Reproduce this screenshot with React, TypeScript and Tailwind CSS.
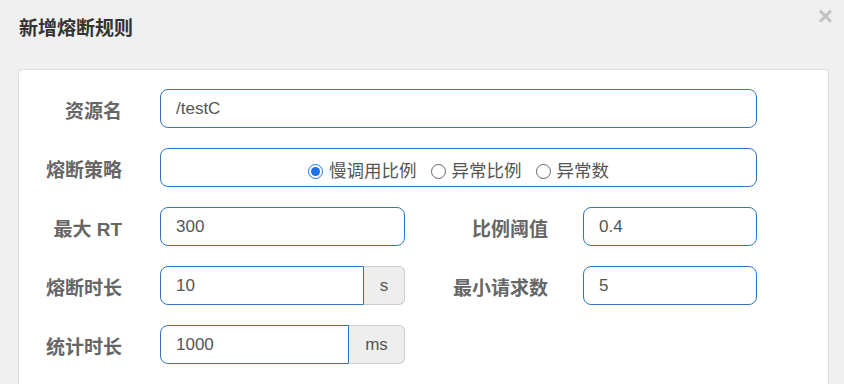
import React from 'react'

const font = { fontFamily: '"Liberation Sans", "Noto Sans CJK SC", sans-serif' }

function Label({ text, w }: { text: string; w: string }) {
  return (
    <label className={`${w} shrink-0 text-right text-[19px] font-bold text-[#666] pt-[7px] leading-[24px]`}>
      {text}
    </label>
  )
}

function TextBox({ value, w }: { value: string; w: string }) {
  return (
    <div
      className={`${w} h-[39px] border border-[#3277b9] rounded-[8px] bg-white flex items-center px-[15px] text-[17px] text-[#555]`}
    >
      {value}
    </div>
  )
}

function AddonBox({ value, unit, w, unitW }: { value: string; unit: string; w: string; unitW: string }) {
  return (
    <div className="flex h-[39px]">
      <div
        className={`${w} border border-[#3277b9] rounded-l-[8px] bg-white flex items-center px-[15px] text-[17px] text-[#555]`}
      >
        {value}
      </div>
      <div
        className={`${unitW} border border-l-0 border-[#cccccc] rounded-r-[6px] bg-[#eeeeee] flex items-center justify-center text-[17px] text-[#555]`}
      >
        {unit}
      </div>
    </div>
  )
}

function Radio({ label, checked }: { label: string; checked?: boolean }) {
  return (
    <span className="flex items-center gap-[6px]">
      {checked ? (
        <span className="w-[15px] h-[15px] rounded-full border-[1.5px] border-[#1a73e8] flex items-center justify-center">
          <span className="w-[9px] h-[9px] rounded-full bg-[#1a73e8]" />
        </span>
      ) : (
        <span className="w-[15px] h-[15px] rounded-full border border-[#666] bg-white" />
      )}
      <span>{label}</span>
    </span>
  )
}

export default function App() {
  return (
    <div className="w-[844px] h-[384px] bg-[#f0f0f0] overflow-hidden relative" style={font}>
      <button className="absolute right-[11px] top-[3px] text-[26px] font-bold leading-none text-[#c2c2c2]">
        ×
      </button>
      <h4 className="pl-[19px] pt-[19px] text-[19px] font-bold text-[#333] leading-[20px]">
        新增熔断规则
      </h4>
      <div className="ml-[18px] mt-[30px] w-[811px] h-[400px] bg-white border border-[#dddddd] rounded-[4px] pt-[19px]">
        <div className="flex flex-col gap-[20px]">
          <div className="flex items-center">
            <Label text="资源名" w="w-[103px]" />
            <div className="ml-[38px]">
              <TextBox value="/testC" w="w-[597px]" />
            </div>
          </div>
          <div className="flex items-center">
            <Label text="熔断策略" w="w-[103px]" />
            <div className="ml-[38px] w-[597px] h-[39px] border border-[#3277b9] rounded-[8px] flex items-center justify-center gap-[14px] pt-[7px] text-[17.5px] text-[#555]">
              <Radio label="慢调用比例" checked />
              <Radio label="异常比例" />
              <Radio label="异常数" />
            </div>
          </div>
          <div className="flex items-center">
            <Label text="最大 RT" w="w-[103px]" />
            <div className="ml-[38px]">
              <TextBox value="300" w="w-[245px]" />
            </div>
            <Label text="比例阈值" w="w-[143px]" />
            <div className="ml-[35px]">
              <TextBox value="0.4" w="w-[174px]" />
            </div>
          </div>
          <div className="flex items-center">
            <Label text="熔断时长" w="w-[103px]" />
            <div className="ml-[38px]">
              <AddonBox value="10" unit="s" w="w-[204px]" unitW="w-[41px]" />
            </div>
            <Label text="最小请求数" w="w-[143px]" />
            <div className="ml-[35px]">
              <TextBox value="5" w="w-[174px]" />
            </div>
          </div>
          <div className="flex items-center">
            <Label text="统计时长" w="w-[103px]" />
            <div className="ml-[38px]">
              <AddonBox value="1000" unit="ms" w="w-[189px]" unitW="w-[56px]" />
            </div>
          </div>
        </div>
      </div>
    </div>
  )
}
